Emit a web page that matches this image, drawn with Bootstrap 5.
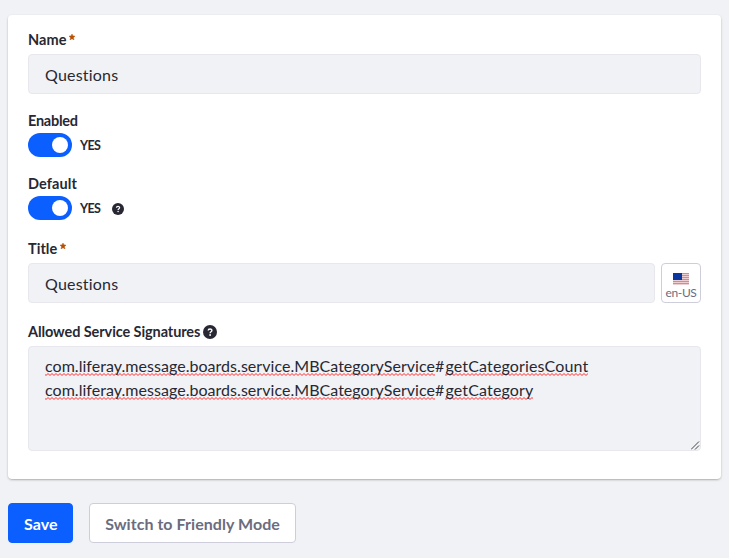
<!DOCTYPE html>
<html lang="en-US">
<head>
<meta charset="utf-8">
<meta name="viewport" content="width=device-width, initial-scale=1">
<title>Questions</title>
<link href="https://cdn.jsdelivr.net/npm/bootstrap@5.3.0/dist/css/bootstrap.min.css" rel="stylesheet">
<style>
body{background:#f1f2f5;color:#272833;font-family:Lato,"Liberation Sans",sans-serif;font-size:16px;padding:15px 8px 0}
.sheet{height:464px;padding:15px 20px 0;border-radius:4px;box-shadow:0 1px 3px -1px rgba(0,0,0,.6)}
.field-label{display:flex;font-size:14.5px;font-weight:700;line-height:17px;height:24px;padding-top:1px;letter-spacing:.05px}
.toggle-label{line-height:21px}
.label-enabled{margin-top:15px;letter-spacing:-.25px}
.label-default{margin-top:15px;letter-spacing:.1px}
.label-next{margin-top:19px}
.label-signatures{letter-spacing:-.09px}
.req{width:6px;height:6px;margin:3px 0 0 3px;color:#b95000}
.label-help{margin:2px 0 0 3px}
.toggle-help{margin:2px 0 0 11px}
.field{background:#f1f2f5;border:1px solid #e7e7ed;border-radius:4px;color:#272833;padding:0 16px;height:40px;line-height:24px;letter-spacing:.2px}
input.field:focus{background:#f1f2f5}
.switch-box.form-check-input{width:44px;height:24px;margin:0;border:0;border-radius:12px;background-color:#0b5fff;background-image:none}
.switch-box::after{content:"";display:block;width:16px;height:16px;margin:4px 4px 0 auto;border-radius:50%;background:#fff}
.switch-text{font-size:12.5px;font-weight:700;margin-left:8px;width:21px;letter-spacing:-.6px;line-height:18px;padding-top:2px}
.locale{width:40px;height:40px;margin-left:6px;border:1px solid #cdced9;border-radius:4px;background:#fff;color:#6b6c7e;padding:6px 0 0;font-size:12px;line-height:13px;letter-spacing:-.35px}
.locale svg{display:block;margin:0 auto 1px}
.signatures{height:105px;padding:7px 16px;letter-spacing:.04px;position:relative;white-space:nowrap}
.signatures b{font-weight:400;letter-spacing:.15px}
.hash{margin-right:1px}
.misspelt{display:inline-block;height:24px;background:url("data:image/svg+xml,%3Csvg xmlns='http://www.w3.org/2000/svg' width='4' height='3'%3E%3Cpath d='M-1 .5L1 2.5L3 .5L5 2.5' fill='none' stroke='%23ff2a2a' stroke-width='1'/%3E%3C/svg%3E") 0 19px repeat-x}
.grip{position:absolute;right:0;bottom:0}
.action{height:40px;border-radius:4px;font-weight:700;line-height:24px;padding:8px 15px 6px;letter-spacing:.05px}
.action-save{background:#0b5fff;border-color:#0b5fff;color:#fff;width:65px}
.action-switch{background:#fff;border-color:#cdced9;color:#6b6c7e;width:207px}
</style>
<script src="https://cdn.jsdelivr.net/npm/bootstrap@5.3.0/dist/js/bootstrap.bundle.min.js"></script>
</head>
<body>
<svg width="0" height="0" class="d-none">
  <symbol id="star" viewBox="0 0 12 12"><path d="M6 0L7.6 3.7L12 4.3L8.8 7.3L10 12L6 9.3L2 12L3.2 7.3L0 4.3L4.4 3.7Z" fill="currentColor" stroke="currentColor" stroke-width=".9"/></symbol>
  <symbol id="help" viewBox="0 0 14 14"><circle cx="7" cy="7" r="7" fill="#272833"/><path d="M5.2 5.6C5.2 3.4 8.9 3.4 8.9 5.5C8.9 6.8 7.1 6.7 7.1 8.2" fill="none" stroke="#fff" stroke-width="1.4"/><circle cx="7.1" cy="10" r=".9" fill="#fff"/></symbol>
</svg>
<form>
  <div class="sheet bg-white">
    <label class="field-label" for="name">Name<svg class="req"><use href="#star"/></svg></label>
    <input id="name" class="form-control field" value="Questions">

    <div class="field-label toggle-label label-enabled">Enabled</div>
    <div class="d-flex align-items-center">
      <input class="form-check-input switch-box" type="checkbox" checked aria-label="Enabled">
      <span class="switch-text">YES</span>
    </div>

    <div class="field-label toggle-label label-default">Default</div>
    <div class="d-flex align-items-center">
      <input class="form-check-input switch-box" type="checkbox" checked aria-label="Default">
      <span class="switch-text">YES</span>
      <svg class="toggle-help" width="12" height="12"><use href="#help"/></svg>
    </div>

    <label class="field-label label-next" for="title">Title<svg class="req"><use href="#star"/></svg></label>
    <div class="d-flex">
      <input id="title" class="form-control field" value="Questions">
      <button type="button" class="btn locale flex-shrink-0">
        <svg width="16" height="12" viewBox="0 0 16 12" shape-rendering="crispEdges">
          <rect width="16" height="12" fill="#efd0d2"/>
          <path d="M0 .5h16M0 2.5h16M0 4.5h16M0 6.5h16M0 8.5h16M0 10.5h16" stroke="#dd878c"/>
          <rect width="9" height="7" fill="#0b36a0"/>
        </svg>en-US
      </button>
    </div>

    <div class="field-label label-next label-signatures">Allowed Service Signatures<svg class="label-help" width="14" height="14"><use href="#help"/></svg></div>
    <div class="form-control field signatures" contenteditable="true" spellcheck="false" role="textbox" aria-multiline="true" aria-label="Allowed Service Signatures"><div><span class="misspelt">com.liferay.message.boards.service.MBCategoryService</span><b><span class="hash">#</span><span class="misspelt">getCategoriesCount</span></b></div><div><span class="misspelt">com.liferay.message.boards.service.MBCategoryService</span><b><span class="hash">#</span><span class="misspelt">getCategory</span></b></div><svg class="grip" width="9" height="9" viewBox="0 0 9 9"><path d="M0 8.5L8 .5M4 8.5L8 4.5" fill="none" stroke="#444" stroke-width="1"/></svg></div>
  </div>
  <div class="d-flex gap-3 mt-4">
    <button type="button" class="btn action action-save">Save</button>
    <button type="button" class="btn action action-switch">Switch to Friendly Mode</button>
  </div>
</form>
</body>
</html>
